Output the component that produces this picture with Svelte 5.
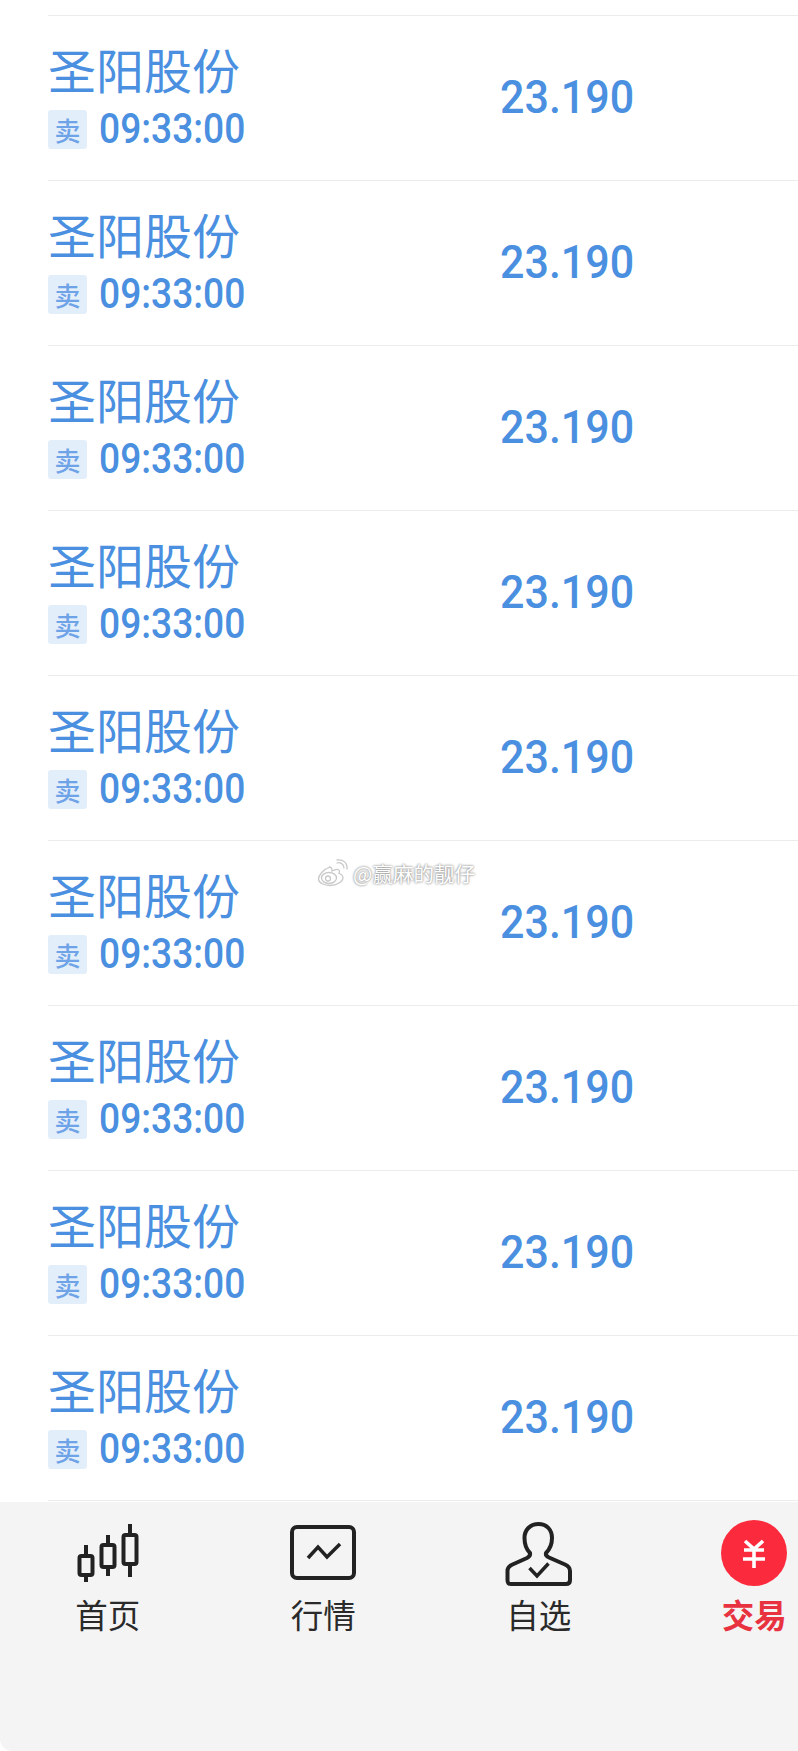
<script>
  const rows = Array.from({ length: 9 }, (_, i) => i);
</script>

<div class="page">
  <div class="list">
    {#each rows as r (r)}
      <div class="row">
        <div class="left">
          <div class="name">圣阳股份</div>
          <div class="sub">
            <span class="tag">卖</span>
            <span class="time">09:33:00</span>
          </div>
        </div>
        <div class="price">23.190</div>
      </div>
    {/each}
    <div class="end"></div>
  </div>

  <div class="watermark">
    <svg width="32" height="28" viewBox="0 0 32 28" fill="none" stroke="#c9c9c9" stroke-width="1.3">
      <path d="M13 8C7 10 1.500 16 1.500 20c0 4 6 6.500 11.500 6.500 7 0 13-4 13-8 0-2.500-2.500-3.500-4-4 .8-2 .5-3.500-1-4-2-.5-5 1-6 1.500.3-2.500-.5-4-3-4z" />
      <ellipse cx="12" cy="19" rx="7.500" ry="5.500" />
      <circle cx="11" cy="19.500" r="2.500" />
      <path d="M20 4c3-1 7 1 7 5M20 1c6-1 11 3 10 9" stroke-linecap="round" />
    </svg>
    <span>@赢麻的靓仔</span>
  </div>

  <nav class="nav">
    <div class="item">
      <svg viewBox="0 0 80 70" width="80" height="70" fill="none" stroke="#222" stroke-width="4">
        <path d="M18 25v37M40 15v41M62 4v53" />
        <rect x="11.500" y="36" width="13" height="19" rx="2" fill="#f4f4f4" />
        <rect x="33.500" y="25" width="13" height="22" rx="2" fill="#f4f4f4" />
        <rect x="55.500" y="15" width="13" height="29" rx="2" fill="#f4f4f4" />
      </svg>
      <span>首页</span>
    </div>
    <div class="item">
      <svg viewBox="0 0 80 70" width="80" height="70" fill="none" stroke="#222" stroke-width="4">
        <rect x="9" y="7" width="62" height="51" rx="5" />
        <path d="M25 38l10-11 9 10 13-13" stroke-width="3.500" />
      </svg>
      <span>行情</span>
    </div>
    <div class="item">
      <svg viewBox="0 0 80 70" width="80" height="70" fill="none" stroke="#222" stroke-width="4">
        <path d="M31 33C27 29 25.500 25 25.500 18C25.500 10 31 4 39.500 4C48 4 53 10 53 18C53 25 51 29 47 33C46.500 35 47.500 36.500 50 37.500L66 44.500C69.500 46 71 48 71 51V60C71 63 69.500 64 67 64H12C9.500 64 8.500 63 8.500 60V51C8.500 48 10 46 13.500 44.500L28 38C30 37 31.500 35.500 31 33Z" stroke-linejoin="round" />
        <path d="M30.500 48L38 56L49.500 43.500" stroke-width="3.500" />
      </svg>
      <span>自选</span>
    </div>
    <div class="item active">
      <svg viewBox="0 0 80 70" width="80" height="70" fill="none">
        <circle cx="40" cy="33" r="33" fill="#fb2a3c" />
        <path d="M31 21l9 8 9-8M30 30h20M29 39h22M40 29v19" stroke="#fff" stroke-width="3.600" />
      </svg>
      <span>交易</span>
    </div>
  </nav>
</div>

<style>
  :global(body) {
    margin: 0;
    background: #fff;
  }
  .page {
    position: relative;
    width: 798px;
    height: 1751px;
    overflow: hidden;
    background: #fff;
    font-family: "Noto Sans CJK SC", "Noto Sans", sans-serif;
  }
  .list {
    height: 1502px;
    padding: 15px 0 0 48px;
    box-sizing: border-box;
  }
  .row {
    height: 165px;
    box-sizing: border-box;
    border-top: 1px solid #ececec;
    display: flex;
    align-items: center;
  }
  .end {
    border-top: 1px solid #ececec;
  }
  .left {
    width: 452px;
    display: flex;
    flex-direction: column;
  }
  .name {
    font-size: 48px;
    line-height: 64px;
    color: #4a8fe0;
    margin-top: -12px;
    font-weight: 400;
  }
  .sub {
    display: flex;
    align-items: center;
    gap: 12px;
    margin-top: 10px;
  }
  .tag {
    width: 39px;
    height: 39px;
    border-radius: 3px;
    background: #e3eefb;
    color: #6fa3e8;
    font-size: 26px;
    font-weight: 500;
    line-height: 39px;
    text-align: center;
  }
  .time {
    font-family: Roboto, sans-serif;
    font-weight: 500;
    font-size: 42px;
    line-height: 39px;
    color: #4a8fe0;
    margin-top: -2px;
    transform: scaleX(0.885);
    transform-origin: left center;
  }
  .price {
    font-family: Roboto, sans-serif;
    font-weight: 500;
    font-size: 47px;
    color: #4a8fe0;
    line-height: 48px;
    margin-top: -2px;
    transform: scaleX(0.915);
    transform-origin: left center;
  }
  .watermark {
    position: absolute;
    left: 317px;
    top: 859px;
    display: flex;
    align-items: center;
    gap: 4px;
    color: #fff;
    font-size: 20.500px;
    line-height: 28px;
    text-shadow: 0 0 2px #888, 0 0 3px #aaa;
  }
  .nav {
    position: absolute;
    left: 0;
    top: 1502px;
    width: 798px;
    height: 249px;
    background: #f4f4f4;
    border-bottom-left-radius: 12px;
    display: flex;
    padding-top: 18px;
    box-sizing: border-box;
  }
  .item {
    flex: 0 0 215.500px;
    display: flex;
    flex-direction: column;
    align-items: center;
    color: #2a2a2a;
    font-size: 32.500px;
    line-height: 44px;
  }
  .item svg {
    display: block;
    margin-bottom: 2px;
  }
  .active {
    color: #e8323f;
    font-weight: 700;
  }
</style>
